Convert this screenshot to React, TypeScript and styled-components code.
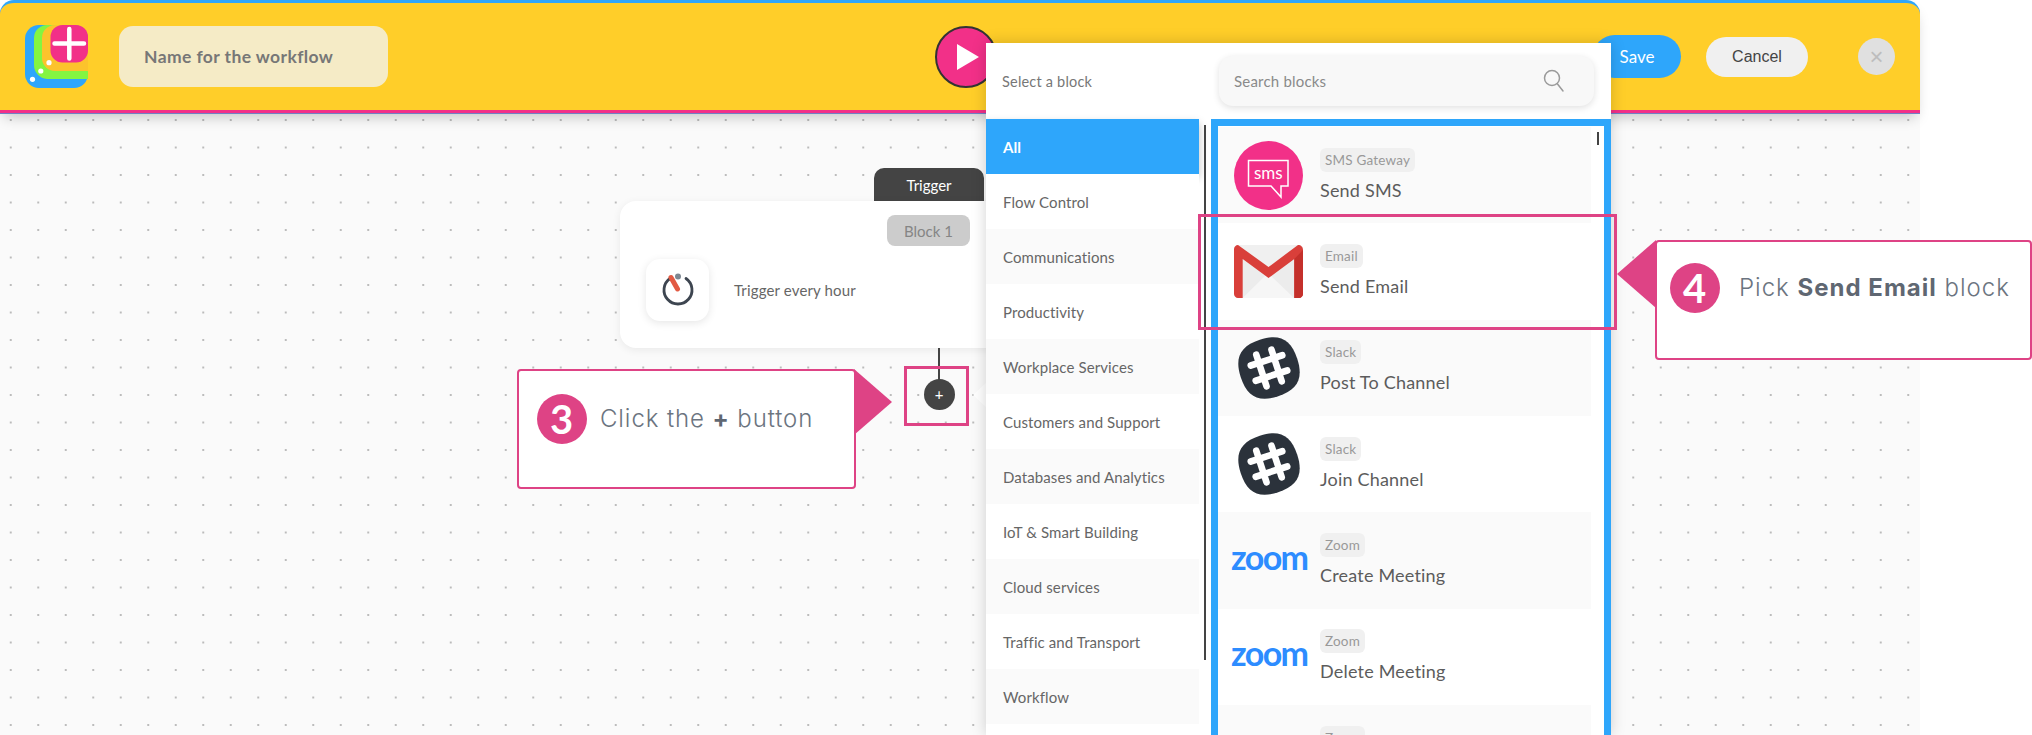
import React from "react";
import styled, { createGlobalStyle } from "styled-components";

const Global = createGlobalStyle`
  html, body { margin: 0; padding: 0; background: #fff; overflow: hidden; }
  * { box-sizing: border-box; }
  #root { font-family: "Lato", "Noto Sans", sans-serif; }
`;

const Page = styled.div`
  position: relative;
  width: 2032px;
  height: 735px;
  overflow: hidden;
  background: #fff;
`;

const Stage = styled.div`
  width: 1920px;
  height: 735px;
  display: flex;
  flex-direction: column;
`;

const Header = styled.header`
  position: relative;
  z-index: 2;
  flex: none;
  height: 113px;
  margin-bottom: 1px;
  display: flex;
  align-items: center;
  padding: 0 25px 0 25px;
  background: #ffce29;
  border-top: 3px solid #2ea6fb;
  border-bottom: 3px solid #f23088;
  border-radius: 14px 14px 0 0;
  box-shadow: 0 1px 0 #6f80c4, 0 8px 14px -4px rgba(0, 0, 0, 0.22);
`;

const LogoWrap = styled.div`
  width: 63px;
  height: 63px;
  flex: none;
`;

const NameField = styled.div`
  width: 269px;
  height: 61px;
  margin-left: 31px;
  padding-left: 25px;
  display: flex;
  align-items: center;
  flex: none;
  background: #f5ebc6;
  border-radius: 14px;
  color: #777;
  font-size: 17.5px;
  font-weight: 700;
  letter-spacing: 0.4px;
`;

const PlayButton = styled.button`
  width: 62px;
  height: 62px;
  margin-left: 547px;
  padding: 0 0 0 4px;
  flex: none;
  display: flex;
  align-items: center;
  justify-content: center;
  background: #f23088;
  border: 2px solid #333;
  border-radius: 50%;
`;

const SaveButton = styled.button`
  width: 88px;
  height: 43px;
  margin-left: 596px;
  flex: none;
  background: #2ea6fb;
  border: 0;
  border-radius: 22px;
  color: #fff;
  font: 400 17px "Lato", sans-serif;
`;

const CancelButton = styled.button`
  width: 102px;
  height: 40px;
  margin-left: 25px;
  flex: none;
  background: #f0f0f0;
  border: 0;
  border-radius: 20px;
  color: #444;
  font: 400 16px "Liberation Sans", sans-serif;
`;

const CloseButton = styled.button`
  width: 37px;
  height: 37px;
  margin-left: 50px;
  padding: 0;
  flex: none;
  background: #e0e0e0;
  border: 0;
  border-radius: 50%;
  color: #bdbdbd;
  font: 400 24px "Liberation Sans", sans-serif;
`;

const Canvas = styled.main`
  position: relative;
  flex: 1;
  background-color: #fafafa;
  background-image: radial-gradient(circle at center, #a8a8a8 0, #a8a8a8 0.6px, transparent 1px);
  background-size: 27.5px 27.5px;
  background-position: -3px -7.75px;
`;

const NodeCard = styled.section`
  position: absolute;
  left: 620px;
  top: 87px;
  width: 420px;
  height: 147px;
  background: #fff;
  border-radius: 16px;
  box-shadow: 0 2px 8px rgba(0, 0, 0, 0.07);
`;

const NodeTab = styled.div`
  position: absolute;
  left: 874px;
  top: 54px;
  width: 110px;
  height: 34px;
  display: flex;
  align-items: center;
  justify-content: center;
  background: #444;
  border-radius: 10px 10px 0 0;
  color: #fff;
  font-size: 15px;
`;

const BlockTag = styled.span`
  position: absolute;
  left: 267px;
  top: 14px;
  width: 83px;
  height: 31px;
  display: flex;
  align-items: center;
  justify-content: center;
  background: #ccc;
  border-radius: 8px;
  color: #858585;
  font-size: 15px;
`;

const NodeBody = styled.div`
  position: absolute;
  left: 26px;
  top: 58px;
  display: flex;
  align-items: center;
  gap: 25px;
`;

const IconTile = styled.div`
  width: 63px;
  height: 62px;
  display: flex;
  align-items: center;
  justify-content: center;
  background: #fff;
  border-radius: 14px;
  box-shadow: 0 2px 8px rgba(0, 0, 0, 0.1);
`;

const NodeText = styled.span`
  color: #666;
  font-size: 15px;
  letter-spacing: 0.15px;
`;

const Connector = styled.div`
  position: absolute;
  left: 938px;
  top: 234px;
  width: 2px;
  height: 34px;
  background: #444;
`;

const AddButton = styled.button`
  position: absolute;
  left: 923.5px;
  top: 264.5px;
  width: 31px;
  height: 31px;
  padding: 0;
  display: flex;
  align-items: center;
  justify-content: center;
  background: #444;
  border: 0;
  border-radius: 50%;
  color: #fff;
  font: 400 15px "Lato", sans-serif;
`;

const PopArrow = styled.div`
  position: absolute;
  left: 973px;
  top: 269px;
  width: 0;
  height: 0;
  border-top: 12px solid transparent;
  border-bottom: 12px solid transparent;
  border-right: 13px solid #fff;
`;

const Highlight = styled.div`
  position: absolute;
  border: 3px solid #de4385;
  pointer-events: none;
  z-index: 6;
`;

const PlusHighlight = styled(Highlight)`
  left: 904px;
  top: 366px;
  width: 65px;
  height: 60px;
`;

const EmailHighlight = styled(Highlight)`
  left: 1198px;
  top: 214px;
  width: 419px;
  height: 116px;
`;

const Panel = styled.aside`
  position: absolute;
  z-index: 4;
  left: 986px;
  top: 43px;
  width: 625px;
  height: 692px;
  display: flex;
  flex-direction: column;
  background: #fff;
  box-shadow: 0 0 14px rgba(0, 0, 0, 0.18);
  overflow: hidden;
`;

const PanelHead = styled.div`
  flex: none;
  height: 76px;
  display: flex;
  align-items: flex-start;
`;

const PanelTitle = styled.div`
  width: 233px;
  padding: 30px 0 0 16px;
  color: #777;
  font-size: 14.5px;
  letter-spacing: 0.2px;
`;

const SearchBox = styled.div`
  width: 375px;
  height: 50px;
  margin-top: 13px;
  padding: 0 29px 0 15px;
  display: flex;
  align-items: center;
  justify-content: space-between;
  background: #f8f8f8;
  border-radius: 14px;
  box-shadow: 0 2px 7px rgba(0, 0, 0, 0.12);
  color: #8a8a8a;
  font-size: 15px;
  letter-spacing: 0.2px;
`;

const PanelBody = styled.div`
  flex: 1;
  min-height: 0;
  display: flex;
`;

const CategoryList = styled.nav`
  flex: none;
  width: 213px;
`;

const Category = styled.div<{ $active?: boolean; $alt?: boolean }>`
  height: 55px;
  padding-left: 17px;
  display: flex;
  align-items: center;
  font-size: 15px;
  letter-spacing: 0.1px;
  color: ${(p) => (p.$active ? "#fff" : "#666")};
  font-weight: ${(p) => (p.$active ? 700 : 400)};
  background: ${(p) => (p.$active ? "#2ea6fb" : p.$alt ? "#fafafa" : "#fff")};
  box-shadow: ${(p) => (p.$active ? "0 4px 8px rgba(0,0,0,.25)" : "none")};
`;

const ScrollGutter = styled.div`
  flex: none;
  width: 12px;
  padding: 6px 0 0 5px;
`;

const ScrollBar = styled.div`
  width: 2px;
  height: 535px;
  background: #444;
`;

const BlockBox = styled.div`
  position: relative;
  flex: none;
  width: 400px;
  padding: 1px 13px 0 0;
  border: 7px solid #2ea6fb;
  border-bottom: 0;
  overflow: hidden;
`;

const MiniBar = styled.div`
  position: absolute;
  right: 5px;
  top: 6px;
  width: 2px;
  height: 13px;
  background: #444;
`;

const BlockRow = styled.div<{ $alt?: boolean }>`
  height: 96.33px;
  display: flex;
  align-items: center;
  background: ${(p) => (p.$alt ? "#fafafa" : "#fff")};
`;

const BlockIcon = styled.div`
  flex: none;
  width: 102px;
  padding-left: 16px;
  display: flex;
  align-items: center;
`;

const CenteredIcon = styled(BlockIcon)`
  padding-left: 19px;
`;

const BlockText = styled.div`
  display: flex;
  flex-direction: column;
  align-items: flex-start;
  gap: 6px;
  margin-top: -1px;
`;

const SourceTag = styled.span`
  height: 24px;
  padding: 0 5px;
  display: flex;
  align-items: center;
  background: #f0f0f0;
  border-radius: 6px;
  color: #999;
  font-size: 13.5px;
  letter-spacing: 0.2px;
`;

const BlockName = styled.span`
  min-height: 24px;
  color: #5c5c5c;
  font-size: 18px;
  line-height: 24px;
  letter-spacing: 0.2px;
`;

const ZoomMark = styled.span`
  margin: -7px 0 0 -3px;
  color: #2d8cff;
  font-size: 34px;
  font-weight: 700;
  line-height: 30px;
  letter-spacing: -1.6px;
`;

const Callout = styled.div`
  position: absolute;
  z-index: 5;
  height: 120px;
  background: #fff;
  border: 2px solid #de4385;
  border-radius: 4px;
  color: #6b7480;
  font-family: "Inter", sans-serif;
  font-size: 24px;
  font-weight: 300;
`;

const CalloutRow = styled.div`
  display: flex;
  align-items: center;
`;

const StepThree = styled(Callout)`
  left: 517px;
  top: 369px;
  width: 339px;
  padding: 23px 0 0 18px;
  letter-spacing: 0.9px;
  ${CalloutRow} { gap: 13px; }
`;

const StepFour = styled(Callout)`
  left: 1655px;
  top: 240px;
  width: 377px;
  padding: 21px 0 0 13px;
  letter-spacing: 1px;
  ${CalloutRow} { gap: 19px; }
`;

const StepBadge = styled.span`
  flex: none;
  width: 50px;
  height: 50px;
  display: flex;
  align-items: center;
  justify-content: center;
  background: #de4385;
  border-radius: 50%;
  color: #fff;
  font-family: "Lato", sans-serif;
  font-size: 40px;
  font-weight: 700;
`;

const CalloutText = styled.span`
  margin-top: -2px;
  b { font-weight: 700; color: #5f6772; }
`;

const ArrowThree = styled.div`
  position: absolute;
  z-index: 5;
  left: 854px;
  top: 369px;
  width: 0;
  height: 0;
  border-top: 33px solid transparent;
  border-bottom: 33px solid transparent;
  border-left: 38px solid #de4385;
`;

const ArrowFour = styled.div`
  position: absolute;
  z-index: 5;
  left: 1617px;
  top: 240px;
  width: 0;
  height: 0;
  border-top: 34px solid transparent;
  border-bottom: 34px solid transparent;
  border-right: 39px solid #de4385;
`;

const CanvasLayer = styled.div`
  position: absolute;
  inset: 0;
`;

const Logo = () => (
  <svg width="63" height="63" viewBox="0 0 63 63">
    <rect width="63" height="63" rx="14" fill="#2ea6fb" />
    <path d="M22 0H49A14 14 0 0 1 63 14V54H22A14 14 0 0 1 9 40V13A13 13 0 0 1 22 0Z" fill="#84f541" />
    <path d="M30 0H49A14 14 0 0 1 63 14V46H30A13 13 0 0 1 17 33V13A13 13 0 0 1 30 0Z" fill="#fcc32c" />
    <rect x="25.5" width="37.5" height="37.5" rx="12" fill="#f23088" />
    <path d="M44.3 4V33.5M29.5 18.5H59" stroke="#fff" strokeWidth="4.5" strokeLinecap="round" />
    <circle cx="7.5" cy="54.3" r="2.6" fill="#fff" />
    <circle cx="15.8" cy="46" r="2.6" fill="#fff" />
    <circle cx="24" cy="37.7" r="2.6" fill="#fff" />
  </svg>
);

const Timer = () => (
  <svg width="36" height="36" viewBox="0 0 36 36" fill="none">
    <path d="M10 6.5A14 14 0 1 0 26 6.5" stroke="#3d4550" strokeWidth="2.8" strokeLinecap="round" />
    <circle cx="18" cy="4.5" r="3" fill="#7d8791" />
    <path d="M11 5.5L17.5 17" stroke="#e25a43" strokeWidth="5" strokeLinecap="round" />
  </svg>
);

const SmsIcon = () => (
  <svg width="69" height="69" viewBox="0 0 69 69">
    <circle cx="34.5" cy="34.5" r="34.5" fill="#f23088" />
    <path d="M14.5 19.5H54V45H47V56L37 45H14.5Z" fill="none" stroke="#fff" strokeWidth="1.5" />
    <text x="34.3" y="38" textAnchor="middle" fill="#fff" fontSize="17" fontFamily="Lato, sans-serif">sms</text>
  </svg>
);

const GmailIcon = () => (
  <svg width="69" height="53" viewBox="0 0 69 53">
    <rect width="69" height="53" rx="4" fill="#f0f0f0" />
    <path d="M8.7 14L34.5 33L60 14V53H8.7Z" fill="#ececec" />
    <path d="M8.7 53L34 28L60 53Z" fill="#f6f6f6" />
    <path d="M4 0L34.5 22L64 0C67 0 69 2 69 5V49C69 51 67 53 65 53H60.3V14L34.5 33L8.7 14V53H4C2 53 0 51 0 49V4C0 2 2 0 4 0Z" fill="#d93f3a" />
    <path d="M60.3 14L69 5V49C69 51 67 53 65 53H60.3Z" fill="#c4302b" />
  </svg>
);

const SlackIcon = () => (
  <svg width="64" height="64" viewBox="4 4 56 56" overflow="visible">
    <g transform="rotate(-18 32 32)">
      <path d="M32 6C50 6 58 14 58 32C58 50 50 58 32 58C14 58 6 50 6 32C6 14 14 6 32 6Z" fill="#2b323b" />
      <path d="M25 17.5V46.5M39 17.5V46.5M17.5 25H46.5M17.5 39H46.5" stroke="#fff" strokeWidth="5.8" strokeLinecap="round" />
    </g>
  </svg>
);

const categories = [
  "Flow Control",
  "Communications",
  "Productivity",
  "Workplace Services",
  "Customers and Support",
  "Databases and Analytics",
  "IoT & Smart Building",
  "Cloud services",
  "Traffic and Transport",
  "Workflow",
];

const blocks = [
  { source: "SMS Gateway", name: "Send SMS", icon: <SmsIcon /> },
  { source: "Email", name: "Send Email", icon: <GmailIcon /> },
  { source: "Slack", name: "Post To Channel", icon: <SlackIcon /> },
  { source: "Slack", name: "Join Channel", icon: <SlackIcon /> },
  { source: "Zoom", name: "Create Meeting", icon: <ZoomMark>zoom</ZoomMark> },
  { source: "Zoom", name: "Delete Meeting", icon: <ZoomMark>zoom</ZoomMark> },
  { source: "Zoom", name: "", icon: <ZoomMark>zoom</ZoomMark> },
];

export default function App() {
  return (
    <Page>
      <Global />
      <Stage>
        <Header>
          <LogoWrap>
            <Logo />
          </LogoWrap>
          <NameField>Name for the workflow</NameField>
          <PlayButton aria-label="Run">
            <svg width="22" height="26" viewBox="0 0 22 26">
              <path d="M0 0L22 13L0 26Z" fill="#fff" />
            </svg>
          </PlayButton>
          <SaveButton>Save</SaveButton>
          <CancelButton>Cancel</CancelButton>
          <CloseButton>×</CloseButton>
        </Header>
        <Canvas>
          <CanvasLayer>
            <NodeTab>Trigger</NodeTab>
            <NodeCard>
              <BlockTag>Block 1</BlockTag>
              <NodeBody>
                <IconTile>
                  <Timer />
                </IconTile>
                <NodeText>Trigger every hour</NodeText>
              </NodeBody>
            </NodeCard>
            <Connector />
            <AddButton>+</AddButton>
            <PopArrow />
          </CanvasLayer>
        </Canvas>
      </Stage>

      <Panel>
        <PanelHead>
          <PanelTitle>Select a block</PanelTitle>
          <SearchBox>
            Search blocks
            <svg width="22" height="24" viewBox="0 0 22 24" fill="none" stroke="#9a9a9a" strokeWidth="1.5">
              <circle cx="9" cy="9" r="7.5" />
              <path d="M14.5 15L20 22" strokeLinecap="round" />
            </svg>
          </SearchBox>
        </PanelHead>
        <PanelBody>
          <CategoryList>
            <Category $active>All</Category>
            {categories.map((c, i) => (
              <Category key={c} $alt={i % 2 === 1}>
                {c}
              </Category>
            ))}
          </CategoryList>
          <ScrollGutter>
            <ScrollBar />
          </ScrollGutter>
          <BlockBox>
            <MiniBar />
            {blocks.map((b, i) => {
              const Icon = i === 2 || i === 3 ? CenteredIcon : BlockIcon;
              return (
                <BlockRow key={i} $alt={i % 2 === 0}>
                  <Icon>{b.icon}</Icon>
                  <BlockText>
                    <SourceTag>{b.source}</SourceTag>
                    <BlockName>{b.name}</BlockName>
                  </BlockText>
                </BlockRow>
              );
            })}
          </BlockBox>
        </PanelBody>
      </Panel>

      <PlusHighlight />
      <EmailHighlight />

      <ArrowThree />
      <StepThree>
        <CalloutRow>
          <StepBadge>3</StepBadge>
          <CalloutText>
            Click the <b>+</b> button
          </CalloutText>
        </CalloutRow>
      </StepThree>

      <ArrowFour />
      <StepFour>
        <CalloutRow>
          <StepBadge>4</StepBadge>
          <CalloutText>
            Pick <b>Send Email</b> block
          </CalloutText>
        </CalloutRow>
      </StepFour>
    </Page>
  );
}
